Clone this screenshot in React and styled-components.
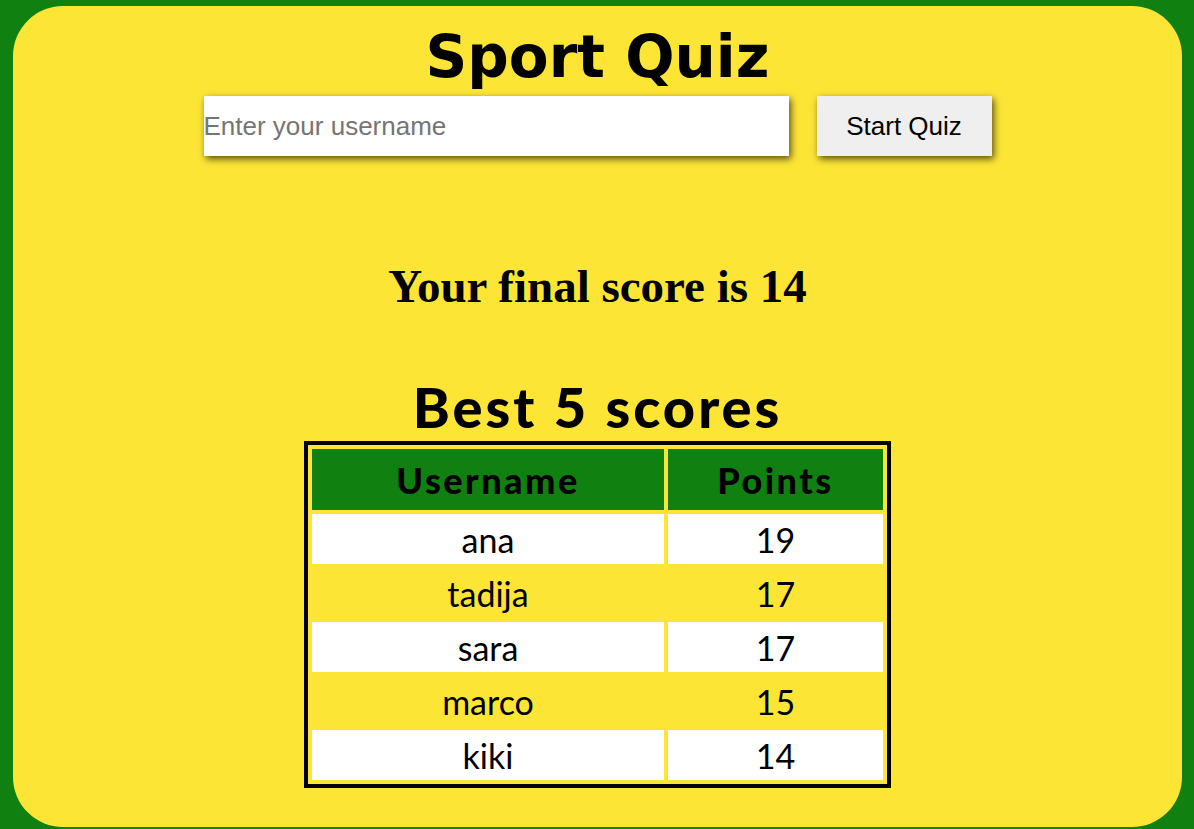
import React from 'react';
import styled, { createGlobalStyle } from 'styled-components';

const GlobalStyle = createGlobalStyle`
  html, body {
    margin: 0;
    padding: 0;
    background: #108010;
    height: 829px;
    overflow: hidden;
  }
`;

const Page = styled.div`
  padding: 6px 12px 0 13px;
  height: 829px;
  box-sizing: border-box;
`;

const Card = styled.div`
  background: #fde536;
  border-radius: 50px;
  height: 821px;
  display: flex;
  flex-direction: column;
  align-items: center;
`;

const Title = styled.h1`
  margin: 12px 0 0;
  font-family: "Comic Sans MS", "DejaVu Sans", sans-serif;
  font-weight: bold;
  font-size: 58px;
  line-height: 78px;
  color: #000;
`;

const Form = styled.div`
  display: flex;
  gap: 28px;
`;

const Input = styled.input`
  width: 585px;
  height: 60px;
  box-sizing: border-box;
  border: none;
  padding: 0;
  background: #fff;
  box-shadow: 2px 3px 7px rgba(0, 0, 0, 0.65);
  font-family: "Liberation Sans", Arial, sans-serif;
  font-size: 26px;
  outline: none;
  &::placeholder {
    color: #757575;
  }
`;

const Button = styled.button`
  width: 175px;
  height: 60px;
  border: none;
  background: #efefef;
  box-shadow: 2px 3px 7px rgba(0, 0, 0, 0.65);
  font-family: "Liberation Sans", Arial, sans-serif;
  font-size: 26px;
  color: #000;
`;

const Score = styled.h2`
  margin: 102px 0 0;
  font-family: "Liberation Serif", "Times New Roman", serif;
  font-weight: bold;
  font-size: 47px;
  line-height: 56px;
`;

const BestTitle = styled.h2`
  margin: 59px 0 0;
  font-family: "Gill Sans", Lato, sans-serif;
  font-weight: 900;
  font-size: 56px;
  letter-spacing: 3px;
  line-height: 68px;
`;

const Table = styled.table`
  border: 4px solid #000;
  border-spacing: 4px 4px;
  font-family: "Gill Sans", Lato, sans-serif;
  font-size: 34px;
  color: #000;
`;

const Head = styled.th`
  background: #108010;
  font-weight: 900;
  font-size: 36px;
  letter-spacing: 2.5px;
  height: 61px;
  padding: 0;
  width: ${p => p.w}px;
`;

const Cell = styled.td`
  background: ${p => (p.odd ? '#fff' : 'transparent')};
  text-align: center;
  height: 50px;
  padding: 0;
`;

const scores = [
  ['ana', 19],
  ['tadija', 17],
  ['sara', 17],
  ['marco', 15],
  ['kiki', 14],
];

export default function App() {
  return (
    <Page>
      <GlobalStyle />
      <Card>
        <Title>Sport Quiz</Title>
        <Form>
          <Input placeholder="Enter your username" />
          <Button>Start Quiz</Button>
        </Form>
        <Score>Your final score is 14</Score>
        <BestTitle>Best 5 scores</BestTitle>
        <Table>
          <thead>
            <tr>
              <Head w={352}>Username</Head>
              <Head w={215}>Points</Head>
            </tr>
          </thead>
          <tbody>
            {scores.map(([name, pts], i) => (
              <tr key={name}>
                <Cell odd={i % 2 === 0}>{name}</Cell>
                <Cell odd={i % 2 === 0}>{pts}</Cell>
              </tr>
            ))}
          </tbody>
        </Table>
      </Card>
    </Page>
  );
}
